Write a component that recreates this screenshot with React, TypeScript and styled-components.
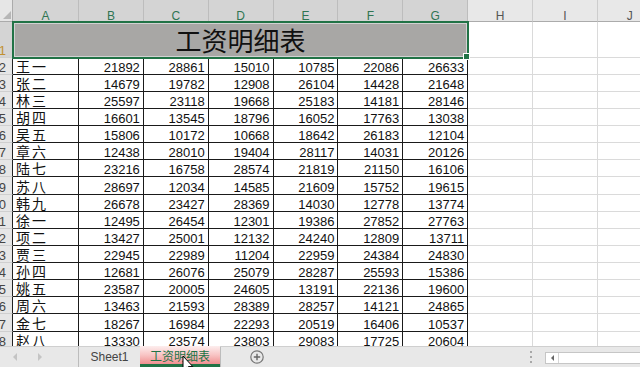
import React from "react";
import styled, { createGlobalStyle } from "styled-components";

const GlobalStyle = createGlobalStyle`
  html, body { margin: 0; padding: 0; background: #ffffff; overflow: hidden; }
  body { font-family: "Liberation Sans", "Noto Sans CJK SC", sans-serif; }
  #root { width: 640px; height: 367px; }
`;

const COL_W = 64.86;
const ROW_H = 17.14;

const Window = styled.div`
  width: 640px;
  height: 367px;
  display: flex;
  flex-direction: column;
  overflow: hidden;
  background: #fff;
`;

const SheetViewport = styled.div`
  flex: 1 1 auto;
  min-height: 0;
  overflow: hidden;
`;

const Grid = styled.div`
  display: grid;
  grid-template-columns: 13px 66px repeat(9, ${COL_W}px);
  grid-template-rows: 22px 35.5px repeat(17, ${ROW_H}px);
  width: max-content;
`;

const Corner = styled.div`
  box-sizing: border-box;
  background: #e6e6e6;
  border-right: 1px solid #ababab;
  border-bottom: 1px solid #ababab;
  display: flex;
  align-items: flex-end;
  justify-content: flex-end;
  padding: 0 1px 2px 0;
  &::after {
    content: "";
    width: 0;
    height: 0;
    border-left: 8px solid transparent;
    border-bottom: 8px solid #b6b6b6;
  }
`;

const ColHeader = styled.div<{ $selected?: boolean }>`
  box-sizing: border-box;
  background: ${(p) => (p.$selected ? "#d4d4d4" : "#e8e8e8")};
  color: ${(p) => (p.$selected ? "#2f7552" : "#555555")};
  border-right: 1px solid ${(p) => (p.$selected ? "#bdbdbd" : "#cdcdcd")};
  border-bottom: 1px solid #ababab;
  font-size: 12px;
  line-height: 12px;
  padding-top: 10px;
  text-align: center;
`;

const RowHeader = styled.div<{ $selected?: boolean; $edge?: boolean }>`
  box-sizing: border-box;
  background: ${(p) => (p.$selected ? "#d4d4d4" : "#e6e6e6")};
  color: ${(p) => (p.$selected ? "#c1902f" : "#444444")};
  border-right: 1px solid ${(p) => (p.$edge ? "#222222" : "#ababab")};
  border-bottom: 1px solid #cfcfcf;
  overflow: hidden;
  display: flex;
  justify-content: flex-end;
  align-items: flex-end;
  padding-right: 6px;
  font-size: 13px;
  line-height: 13px;
  white-space: nowrap;
`;

const TitleCell = styled.div`
  grid-column: span 7;
  position: relative;
  z-index: 1;
  box-sizing: border-box;
  margin: -1px;
  border: 2px solid #217346;
  background: #a8a7a5;
  box-shadow: inset 0 0 0 1px #d2d2d2;
  display: flex;
  align-items: center;
  justify-content: center;
  font-size: 26px;
  color: #111111;
`;

const FillHandle = styled.span`
  position: absolute;
  right: -3px;
  bottom: -3px;
  width: 5px;
  height: 5px;
  background: #217346;
  border: 1px solid #ffffff;
`;

const DataCell = styled.div<{ $name?: boolean }>`
  box-sizing: border-box;
  border-right: 1px solid #1a1a1a;
  border-bottom: 1px solid #1a1a1a;
  display: flex;
  align-items: flex-end;
  justify-content: ${(p) => (p.$name ? "flex-start" : "flex-end")};
  padding: ${(p) => (p.$name ? "0 0 0 3px" : "0 3px 0 0")};
  font-size: ${(p) => (p.$name ? "14px" : "13px")};
  letter-spacing: ${(p) => (p.$name ? "2px" : "0")};
  line-height: 13px;
  color: #111111;
  overflow: hidden;
  white-space: nowrap;
`;

const BlankCell = styled.div`
  box-sizing: border-box;
  border-right: 1px solid #dadada;
  border-bottom: 1px solid #dadada;
`;

const TabBar = styled.div`
  position: relative;
  flex: none;
  height: 21px;
  box-sizing: border-box;
  display: flex;
  align-items: stretch;
  background: #e8e8e8;
  border-top: 1px solid #cfcfcf;
  overflow: visible;
`;

const NavArrows = styled.div`
  width: 78px;
  display: flex;
  align-items: center;
  padding-left: 13px;
  gap: 21px;
  box-sizing: border-box;
`;

const NavArrow = styled.span<{ $dir: "left" | "right" }>`
  width: 0;
  height: 0;
  border-top: 4px solid transparent;
  border-bottom: 4px solid transparent;
  ${(p) =>
    p.$dir === "left"
      ? "border-right: 4px solid #c4c4c4;"
      : "border-left: 4px solid #c4c4c4;"}
`;

const TabDivider = styled.span`
  width: 1px;
  background: #bcbcbc;
`;

const SheetTab = styled.div`
  width: 61px;
  display: flex;
  align-items: center;
  justify-content: center;
  font-size: 12px;
  color: #444444;
`;

const ActiveTab = styled.div`
  width: 80px;
  margin-top: -1px;
  box-sizing: border-box;
  display: flex;
  align-items: center;
  justify-content: center;
  font-size: 12px;
  color: #217346;
  background: linear-gradient(to bottom, #fdeeee 0%, #f8c4c4 50%, #f09090 100%);
  border-bottom: 3px solid #217346;
`;

const AddButton = styled.div`
  margin-left: 29px;
  display: flex;
  align-items: center;
`;

const Spacer = styled.div`
  flex: 1;
`;

const Grip = styled.div`
  display: flex;
  align-items: center;
  margin-right: 13px;
`;

const HScroll = styled.div`
  width: 95px;
  height: 12px;
  align-self: center;
  margin-top: 1px;
  box-sizing: border-box;
  background: #ffffff;
  border: 1px solid #c6c6c6;
  border-right: none;
  display: flex;
`;

const ScrollButton = styled.div`
  width: 13px;
  box-sizing: border-box;
  border-right: 1px solid #d6d6d6;
  display: flex;
  align-items: center;
  justify-content: center;
  &::before {
    content: "";
    width: 0;
    height: 0;
    border-top: 3px solid transparent;
    border-bottom: 3px solid transparent;
    border-right: 3px solid #666666;
  }
`;

const Cursor = styled.svg`
  position: absolute;
  left: 182px;
  top: 8px;
  pointer-events: none;
`;

const rows: [string, number[]][] = [
  ["王一", [21892, 28861, 15010, 10785, 22086, 26633]],
  ["张二", [14679, 19782, 12908, 26104, 14428, 21648]],
  ["林三", [25597, 23118, 19668, 25183, 14181, 28146]],
  ["胡四", [16601, 13545, 18796, 16052, 17763, 13038]],
  ["吴五", [15806, 10172, 10668, 18642, 26183, 12104]],
  ["章六", [12438, 28010, 19404, 28117, 14031, 20126]],
  ["陆七", [23216, 16758, 28574, 21819, 21150, 16106]],
  ["苏八", [28697, 12034, 14585, 21609, 15752, 19615]],
  ["韩九", [26678, 23427, 28369, 14030, 12778, 13774]],
  ["徐一", [12495, 26454, 12301, 19386, 27852, 27763]],
  ["项二", [13427, 25001, 12132, 24240, 12809, 13711]],
  ["贾三", [22945, 22989, 11204, 22959, 24384, 24830]],
  ["孙四", [12681, 26076, 25079, 28287, 25593, 15386]],
  ["姚五", [23587, 20005, 24605, 13191, 22136, 19600]],
  ["周六", [13463, 21593, 28389, 28257, 14121, 24865]],
  ["金七", [18267, 16984, 22293, 20519, 16406, 10537]],
  ["赵八", [13330, 23574, 23803, 29083, 17725, 20604]],
];

const columns = ["A", "B", "C", "D", "E", "F", "G", "H", "I", "J"];
const blanks = ["H", "I", "J"];

export default function App() {
  return (
    <Window>
      <GlobalStyle />
      <SheetViewport>
        <Grid>
          <Corner />
          {columns.map((c, i) => (
            <ColHeader key={c} $selected={i < 7}>
              {c}
            </ColHeader>
          ))}

          <RowHeader $selected>1</RowHeader>
          <TitleCell>
            工资明细表
            <FillHandle />
          </TitleCell>
          {blanks.map((b) => (
            <BlankCell key={"t" + b} />
          ))}

          {rows.map(([name, values], r) => (
            <React.Fragment key={name}>
              <RowHeader $edge>{r + 2}</RowHeader>
              <DataCell $name>{name}</DataCell>
              {values.map((v, c) => (
                <DataCell key={c}>{v}</DataCell>
              ))}
              {blanks.map((b) => (
                <BlankCell key={b} />
              ))}
            </React.Fragment>
          ))}
        </Grid>
      </SheetViewport>

      <TabBar>
        <NavArrows>
          <NavArrow $dir="left" />
          <NavArrow $dir="right" />
        </NavArrows>
        <TabDivider />
        <SheetTab>Sheet1</SheetTab>
        <ActiveTab>工资明细表</ActiveTab>
        <TabDivider />
        <AddButton>
          <svg width="14" height="14" viewBox="0 0 14 14">
            <circle cx="7" cy="7" r="6.2" fill="none" stroke="#777777" strokeWidth="1.2" />
            <path d="M7 3.8V10.2M3.8 7H10.2" stroke="#666666" strokeWidth="1.4" />
          </svg>
        </AddButton>
        <Spacer />
        <Grip>
          <svg width="2" height="12" viewBox="0 0 2 12">
            <rect x="0" y="0" width="2" height="2" fill="#a8a8a8" />
            <rect x="0" y="5" width="2" height="2" fill="#a8a8a8" />
            <rect x="0" y="10" width="2" height="2" fill="#a8a8a8" />
          </svg>
        </Grip>
        <HScroll>
          <ScrollButton />
        </HScroll>
        <Cursor width="12" height="19" viewBox="0 0 12 19">
          <path
            d="M1 1 L1 15.5 L4.3 12.4 L6.6 17.6 L8.7 16.7 L6.4 11.6 L10.8 11.6 Z"
            fill="#ffffff"
            stroke="#000000"
            strokeWidth="1"
            strokeLinejoin="round"
          />
        </Cursor>
      </TabBar>
    </Window>
  );
}
